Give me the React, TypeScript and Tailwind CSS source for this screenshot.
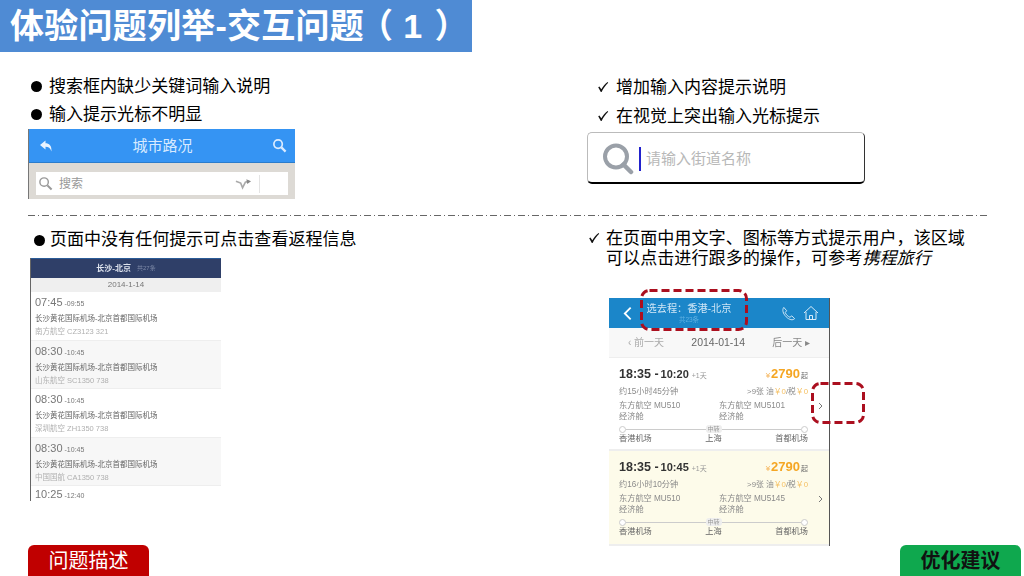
import React from "react";

const FONT = "[font-family:'Liberation_Sans','Noto_Sans_CJK_SC',sans-serif]";

function Bullet({ children, className = "" }: { children: React.ReactNode; className?: string }) {
  return (
    <div className={`flex items-center text-[17.05px] leading-[28px] text-black ${className}`}>
      <span className="w-[11px] h-[11px] rounded-full bg-black shrink-0" />
      {children}
    </div>
  );
}

function Check({ className = "" }: { className?: string }) {
  return (
    <svg viewBox="0 0 12 12" className={`w-[12px] h-[12px] shrink-0 ${className}`}>
      <path d="M1.2 6.2 L2.4 5.4 L4.3 8.2 C6 5.4 8 3 10.6 1 L11.2 1.8 C8.6 4.4 6.4 7.4 4.6 11 H3.8 Z" fill="#111" />
    </svg>
  );
}

function CityBar() {
  return (
    <div className="ml-[28px] w-[267px] h-[70px] bg-[#dddad5] border-l border-[#777] flex flex-col">
      <div className="h-[34px] bg-[#3594f3] flex items-center justify-between border-b border-[#2a7ccc] pl-[10px] pr-[8px]">
        <svg viewBox="0 0 14 14" className="w-[14px] h-[14px]">
          <path d="M1 6 L6.5 1.5 V4.2 C10 4.2 13 6.5 12.4 12.5 C11.4 9.2 9.6 7.8 6.5 7.8 V10.5 Z" fill="#e9f3ff" />
        </svg>
        <span className="pt-[1px] text-[15px] text-[#d8eaff]">城市路况</span>
        <svg viewBox="0 0 16 16" className="w-[15px] h-[15px]">
          <circle cx="6.5" cy="6.5" r="4.5" fill="none" stroke="#dcecff" strokeWidth="1.8" />
          <path d="M10 10 L14.5 14.5" stroke="#dcecff" strokeWidth="2.4" />
        </svg>
      </div>
      <div className="mt-[9px] mx-[7px] h-[23px] bg-white flex items-center pl-[2px]">
        <svg viewBox="0 0 16 16" className="w-[15px] h-[15px]">
          <circle cx="6.5" cy="6.5" r="4.5" fill="none" stroke="#999" strokeWidth="1.5" />
          <path d="M10 10 L14.5 14.5" stroke="#999" strokeWidth="2.2" />
        </svg>
        <span className="ml-[6px] text-[12px] text-[#999]">搜索</span>
        <svg viewBox="0 0 18 12" className="ml-auto w-[17px] h-[12px]">
          <path d="M1 3 L6 5 L8 10 L11 4 L15 3" fill="none" stroke="#aaa" strokeWidth="1.8" />
          <path d="M12 1 L17 3 L13 6 Z" fill="#888" />
        </svg>
        <span className="ml-[7px] w-px h-[18px] bg-[#e4e4e4]" />
        <span className="w-[28px]" />
      </div>
    </div>
  );
}

function SearchBox() {
  return (
    <div className="w-[278px] h-[52px] bg-white rounded-[5px] border border-[#bbb] border-r-[#333] border-b-2 border-b-black flex items-center pl-[14px]">
      <svg viewBox="0 0 32 32" className="mt-[3px] w-[32px] h-[34px]">
        <circle cx="14" cy="13.5" r="11" fill="none" stroke="#9aa0a8" strokeWidth="4" />
        <path d="M21.5 21.5 L29 29" stroke="#9aa0a8" strokeWidth="4.5" strokeLinecap="round" />
      </svg>
      <span className="mt-[2px] ml-[5px] w-[2px] h-[24px] bg-[#2222cc]" />
      <span className="mt-[3px] ml-[5px] text-[15px] text-[#b8b8b8]">请输入街道名称</span>
    </div>
  );
}

const FLIGHTS = [
  { t: "07:45", e: "-09:55", a: "南方航空 CZ3123 321", bg: "bg-white" },
  { t: "08:30", e: "-10:45", a: "山东航空 SC1350 738", bg: "bg-[#f7f7f7]" },
  { t: "08:30", e: "-10:45", a: "深圳航空 ZH1350 738", bg: "bg-white" },
  { t: "08:30", e: "-10:45", a: "中国国航 CA1350 738", bg: "bg-[#f7f7f7]" },
];

function LeftPhone() {
  return (
    <div className="ml-[30px] mt-[4px] w-[191px] h-[243px] border-l border-[#666] overflow-hidden flex flex-col blur-[0.35px]">
      <div className="h-[20px] shrink-0 bg-[#2f3f68] border-t border-[#2a5c98] flex items-center justify-center gap-[6px]">
        <span className="text-[8px] font-bold text-[#dfe4ee]">长沙-北京</span>
        <span className="text-[6px] text-[#7e8aa8]">共27条</span>
      </div>
      <div className="h-[14px] shrink-0 bg-[#efefef] flex items-center justify-center text-[8px] text-[#777]">2014-1-14</div>
      {FLIGHTS.map((f, i) => (
        <div key={i} className={`h-[48.6px] shrink-0 pl-[4px] border-b border-[#eeeeee] ${f.bg}`}>
          <div className="mt-[2px] h-[17px] flex items-baseline text-[#777]">
            <span className="text-[11px] leading-[17px]">{f.t}</span>
            <span className="ml-[2px] text-[7px]">{f.e}</span>
          </div>
          <div className="mt-[2px] text-[7.5px] leading-[11px] text-[#666]">长沙黄花国际机场-北京首都国际机场</div>
          <div className="mt-[2px] text-[7.5px] leading-[11px] text-[#b0b0b0]">{f.a}</div>
        </div>
      ))}
      <div className="pl-[4px] flex items-baseline text-[#777]">
        <span className="text-[11px] leading-[17px]">10:25</span>
        <span className="ml-[2px] text-[7px]">-12:40</span>
      </div>
    </div>
  );
}

function Ticket({ end, dur, no, bg }: { end: string; dur: string; no: string; bg: string }) {
  return (
    <div className={`pl-[10px] pr-[6px] pt-[8px] border-b-2 border-[#eeeeee] text-[#8a8a8a] ${bg}`}>
      <div className="flex items-baseline h-[16px] leading-[16px] pr-[15px]">
        <span className="text-[12.5px] font-bold text-[#333]">18:35 - </span>
        <span className="ml-[2px] text-[11px] font-bold text-[#333]">{end}</span>
        <span className="ml-[3px] text-[7px] text-[#999]">+1天</span>
        <span className="ml-auto text-[8px] text-[#f5b45a]">¥</span>
        <span className="ml-[1px] text-[13px] font-bold text-[#f5a623]">2790</span>
        <span className="ml-[1px] text-[7px] text-[#666]">起</span>
      </div>
      <div className="mt-[3px] flex items-center h-[14px] text-[8.2px] pr-[15px]">
        <span>{dur}</span>
        <span className="ml-auto text-[7.8px]">
          &gt;9张 油<span className="text-[#f5c063]">￥0</span>/税<span className="text-[#f5c063]">￥0</span>
        </span>
      </div>
      <div className="mt-[1px] flex items-start text-[8.2px] leading-[11px]">
        <div className="w-[100px]">东方航空 MU510<br />经济舱</div>
        <div>东方航空 {no}<br />经济舱</div>
        <svg viewBox="0 0 5 8" className="ml-auto mt-[2px] w-[5px] h-[8px]">
          <path d="M1 1 L4 4 L1 7" fill="none" stroke="#777" strokeWidth="1" />
        </svg>
      </div>
      <div className="mt-[3px] mr-[15px] flex items-center h-[8px]">
        <span className="w-[7px] h-[7px] rounded-full border border-[#ccc] bg-white" />
        <span className="flex-1 h-px bg-[#ccc]" />
        <span className="px-[2px] rounded-[3px] bg-[#eeeeee] text-[6px] leading-[8px] text-[#999]">中转</span>
        <span className="flex-1 h-px bg-[#ccc]" />
        <span className="w-[7px] h-[7px] rounded-full border border-[#ccc] bg-white" />
      </div>
      <div className="mr-[15px] pb-[5px] flex justify-between text-[8.2px] leading-[11px] text-[#666]">
        <span>香港机场</span>
        <span>上海</span>
        <span>首都机场</span>
      </div>
    </div>
  );
}

function DashedBox({ w, h, className }: { w: number; h: number; className: string }) {
  return (
    <svg width={w} height={h} className={`absolute ${className}`}>
      <rect x="1.5" y="1.5" width={w - 3} height={h - 3} rx="8" fill="none" stroke="#ab0f1f" strokeWidth="3" strokeDasharray="8 4" />
    </svg>
  );
}

function RightPhone() {
  return (
    <div className="relative ml-[22px] mt-[29px] w-[221px] h-[248px]">
      <div className="h-full border-r border-[#555] flex flex-col blur-[0.35px]">
        <div className="h-[30px] shrink-0 bg-[#1b86c9] flex items-center pl-[14px] pr-[10px] text-[#cfe6f6]">
          <svg viewBox="0 0 10 16" className="w-[9px] h-[15px]">
            <path d="M8.5 1.5 L2 8 L8.5 14.5" fill="none" stroke="#fff" strokeWidth="2" />
          </svg>
          <div className="ml-[12px] w-[90px] flex flex-col items-center">
            <span className="text-[10.2px] leading-[12px] whitespace-nowrap">选去程：香港-北京</span>
            <span className="text-[6.5px] leading-[9px] text-[#5fb0e2]">共23条</span>
          </div>
          <svg viewBox="0 0 16 16" className="ml-auto w-[15px] h-[15px]">
            <path d="M3 1.5 L6 5 L4.5 7 C5.5 9.5 7.5 11 9.5 12 L11.5 10.5 L14.5 13.5 C12.5 15.5 9 15 5.5 11.5 C2 8 1 4 3 1.5 Z" fill="none" stroke="#d7ebf8" strokeWidth="1" />
          </svg>
          <svg viewBox="0 0 16 16" className="ml-[7px] w-[16px] h-[16px]">
            <path d="M1 8 L8 1.5 L15 8 M3 7 V14.5 H13 V7 M6.5 14.5 V10.5 H9.5 V14.5" fill="none" stroke="#d7ebf8" strokeWidth="1" />
          </svg>
        </div>
        <div className="h-[30px] shrink-0 bg-[#f8f8f8] border-b border-[#eeeeee] flex items-center justify-between pl-[19px] pr-[19px] text-[10px] text-[#888]">
          <span className="text-[#aaa]">‹ 前一天</span>
          <span className="text-[10.5px] text-[#666]">2014-01-14</span>
          <span>后一天 ▸</span>
        </div>
        <Ticket end="10:20" dur="约15小时45分钟" no="MU5101" bg="bg-white h-[93px]" />
        <Ticket end="10:45" dur="约16小时10分钟" no="MU5145" bg="bg-[#fdfbea] h-[95px]" />
      </div>
      <DashedBox w={108} h={42} className="left-[31px] top-[-9px]" />
      <DashedBox w={54} h={42} className="left-[202px] top-[84px]" />
    </div>
  );
}

export default function App() {
  return (
    <div className={`w-[1024px] h-[576px] overflow-hidden bg-white flex flex-col ${FONT}`}>
      <div className="w-[472px] h-[52px] shrink-0 bg-[#4f8bd4] flex items-center pl-[10px] text-[34px] tracking-[0.25px] font-bold text-white whitespace-nowrap leading-none">
        <span>体验问题列举-交互问题</span>
        <span className="ml-[12px] [font-feature-settings:'halt']">（</span>
        <span className="ml-[10px]">1</span>
        <span className="ml-[12px] [font-feature-settings:'halt']">）</span>
      </div>

      <div className="h-[163px] shrink-0 flex">
        <div className="w-[587px] shrink-0 flex flex-col">
          <div className="mt-[20px] ml-[31px]">
            <Bullet className="pt-[1px] h-[28px]"><span className="ml-[7px]">搜索框内缺少关键词输入说明</span></Bullet>
            <Bullet className="pt-[1px] h-[28px]"><span className="ml-[7px]">输入提示光标不明显</span></Bullet>
          </div>
          <div className="mt-[1px]"><CityBar /></div>
        </div>
        <div className="flex-1 flex flex-col">
          <div className="mt-[21px] ml-[10px] flex flex-col text-[17px] leading-[29px] text-black">
            <div className="flex items-center"><Check className="mb-[2px]" /><span className="ml-[7px]">增加输入内容提示说明</span></div>
            <div className="flex items-center"><Check className="mb-[2px]" /><span className="ml-[7px]">在视觉上突出输入光标提示</span></div>
          </div>
          <div className="mt-[1px]"><SearchBox /></div>
        </div>
      </div>

      <div className="ml-[28px] w-[960px] h-px shrink-0 bg-[repeating-linear-gradient(90deg,#666_0,#666_7px,transparent_7px,transparent_10px,#666_10px,#666_11px,transparent_11px,transparent_14px)]" />

      <div className="h-[329px] shrink-0 flex">
        <div className="w-[587px] shrink-0 flex flex-col">
          <Bullet className="mt-[9px] ml-[34px] pt-[1px] h-[29px]"><span className="ml-[5px]">页面中没有任何提示可点击查看返程信息</span></Bullet>
          <LeftPhone />
        </div>
        <div className="flex-1 flex flex-col">
          <div className="mt-[13px] ml-[1px] flex items-start text-[17.1px] leading-[20px] text-black">
            <Check className="mt-[3px]" />
            <div className="ml-[6px]">
              在页面中用文字、图标等方式提示用户，该区域<br />
              可以点击进行跟多的操作，可参考<em className="italic">携程旅行</em>
            </div>
          </div>
          <RightPhone />
        </div>
      </div>

      <div className="flex-1 flex justify-between pl-[28px] pr-[3px]">
        <div className="w-[121px] h-[31px] rounded-t-[6px] bg-[#c00000] flex items-center justify-center text-[20px] text-white">问题描述</div>
        <div className="w-[121px] h-[31px] rounded-t-[6px] bg-[#0fa84e] flex items-center justify-center text-[20px] font-bold text-[#111]">优化建议</div>
      </div>
    </div>
  );
}
